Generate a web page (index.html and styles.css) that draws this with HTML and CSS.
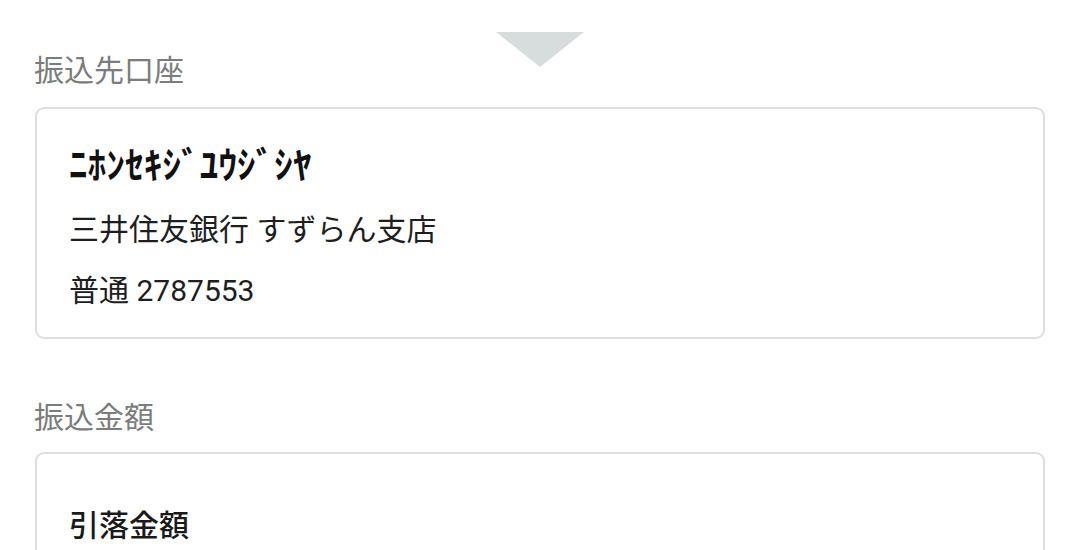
FILE: index.html
```html
<!DOCTYPE html>
<html lang="ja">
<head>
<meta charset="utf-8">
<link rel="stylesheet" href="styles.css">
</head>
<body>
<div class="page">
  <div class="pointer"></div>
  <section class="section first">
    <h2 class="label">振込先口座</h2>
    <div class="card account">
      <p class="kana">ﾆﾎﾝｾｷｼﾞﾕｳｼﾞｼﾔ</p>
      <p class="line bank">三井住友銀行 すずらん支店</p>
      <p class="line number">普通 2787553</p>
    </div>
  </section>
  <section class="section second">
    <h2 class="label">振込金額</h2>
    <div class="card amount">
      <p class="line sub">引落金額</p>
    </div>
  </section>
</div>
</body>
</html>
```
FILE: styles.css
```css
html, body {
  margin: 0;
  padding: 0;
  background: #ffffff;
}
body {
  font-family: Roboto, "Noto Sans CJK JP", sans-serif;
  color: #1e1e1e;
  overflow: hidden;
  height: 550px;
}
.page {
  position: relative;
  padding: 50px 35px 0 35px;
}
.pointer {
  position: absolute;
  top: 32px;
  left: 496px;
  width: 0;
  height: 0;
  border-left: 44px solid transparent;
  border-right: 44px solid transparent;
  border-top: 35px solid #d6dddc;
}
.section {
  display: flex;
  flex-direction: column;
}
.second {
  margin-top: 58px;
}
.label {
  margin: 0 0 21px -1px;
  font-family: "Noto Sans CJK JP", sans-serif;
  font-size: 30px;
  line-height: 36px;
  font-weight: 400;
  color: #7a7d7c;
}
.second .label {
  margin-bottom: 19px;
}
.card {
  border: 2px solid #dedede;
  border-radius: 9px;
  padding: 0 32px;
  display: flex;
  flex-direction: column;
}
.account {
  padding-top: 36px;
  padding-bottom: 28px;
}
.amount {
  padding-top: 54px;
  height: 200px;
}
.card p {
  margin: 0;
  font-size: 30px;
  line-height: 36px;
}
.card .kana {
  font-family: "Noto Sans CJK JP", sans-serif;
  font-size: 37px;
  font-weight: 700;
  letter-spacing: 0.2px;
  color: #111;
}
.bank {
  margin-top: 31px !important;
}
.number {
  margin-top: 25px !important;
}
.sub {
  font-weight: 500;
  color: #1a1a1a;
}
```
